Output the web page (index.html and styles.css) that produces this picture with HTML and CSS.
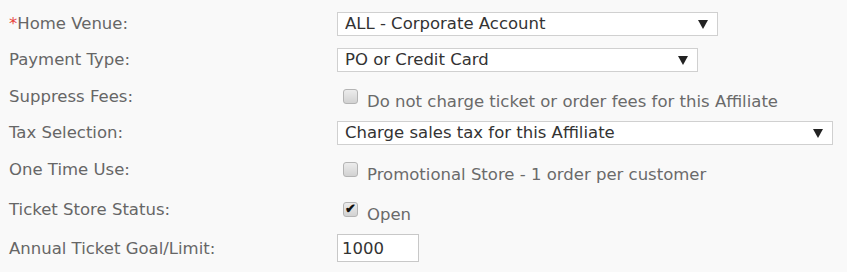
FILE: index.html
```html
<!DOCTYPE html>
<html lang="en">
<head>
    <meta charset="UTF-8">
    <title>Affiliate Settings</title>
    <link rel="stylesheet" href="styles.css">
</head>
<body>
    <form class="settings-form">
        <div class="form-row row-venue">
            <label class="field-label"><span class="required">*</span>Home Venue:</label>
            <div class="select-wrap venue-select">
                <select class="field-select">
                    <option>ALL - Corporate Account</option>
                </select>
            </div>
        </div>
        <div class="form-row row-payment">
            <label class="field-label">Payment Type:</label>
            <div class="select-wrap payment-select">
                <select class="field-select">
                    <option>PO or Credit Card</option>
                </select>
            </div>
        </div>
        <div class="form-row check-row row-fees">
            <label class="field-label">Suppress Fees:</label>
            <label class="check-option">
                <input type="checkbox" class="check-box">
                <span>Do not charge ticket or order fees for this Affiliate</span>
            </label>
        </div>
        <div class="form-row row-tax">
            <label class="field-label">Tax Selection:</label>
            <div class="select-wrap tax-select">
                <select class="field-select">
                    <option>Charge sales tax for this Affiliate</option>
                </select>
            </div>
        </div>
        <div class="form-row check-row row-once">
            <label class="field-label">One Time Use:</label>
            <label class="check-option">
                <input type="checkbox" class="check-box">
                <span>Promotional Store - 1 order per customer</span>
            </label>
        </div>
        <div class="form-row check-row row-status">
            <label class="field-label">Ticket Store Status:</label>
            <label class="check-option">
                <input type="checkbox" class="check-box" checked>
                <span>Open</span>
            </label>
        </div>
        <div class="form-row row-goal">
            <label class="field-label">Annual Ticket Goal/Limit:</label>
            <input type="text" class="field-input" value="1000">
        </div>
    </form>
</body>
</html>
```

FILE: styles.css
```css
body {
    margin: 0;
    background-color: #f9f9f9;
    font-family: "DejaVu Sans", Verdana, sans-serif;
    font-size: 16.5px;
    color: #666;
}
.settings-form {
    padding-top: 11px;
}
.form-row {
    display: flex;
    align-items: center;
}
.field-label {
    width: 328px;
    padding-left: 9px;
    flex-shrink: 0;
}
.required {
    color: #e8413a;
}
.row-venue {
    height: 25px;
}
.row-payment {
    height: 25px;
    margin-top: 11px;
}
.row-fees {
    height: 26px;
    margin-top: 11px;
}
.row-tax {
    height: 25px;
    margin-top: 11px;
}
.row-once {
    height: 26px;
    margin-top: 11px;
}
.row-status {
    height: 26px;
    margin-top: 14px;
}
.row-goal {
    height: 28px;
    margin-top: 12px;
}
.check-row .check-option {
    margin-top: 10px;
}
.select-wrap {
    position: relative;
}
.select-wrap::after {
    content: "";
    position: absolute;
    right: 10px;
    top: 8px;
    border-left: 5px solid transparent;
    border-right: 5px solid transparent;
    border-top: 9px solid #222;
    pointer-events: none;
}
.field-select {
    appearance: none;
    -webkit-appearance: none;
    display: block;
    width: 100%;
    height: 24px;
    margin: 0;
    padding: 0 7px;
    border: 1px solid #d0d0d0;
    border-radius: 0;
    background-color: #fff;
    font-family: "DejaVu Sans", Verdana, sans-serif;
    font-size: 16.5px;
    color: #333;
}
.venue-select {
    width: 381px;
}
.payment-select {
    width: 361px;
}
.tax-select {
    width: 496px;
}
.check-option {
    display: flex;
    align-items: center;
    gap: 9px;
    padding-left: 6px;
    color: #6a6a6a;
}
.check-box {
    appearance: none;
    -webkit-appearance: none;
    position: relative;
    width: 15px;
    height: 15px;
    margin: 0;
    margin-top: -10px;
    border: 1px solid #b4b4b4;
    border-radius: 3px;
    background: linear-gradient(#ececec, #d2d2d2);
}
.check-box:checked::after {
    content: "\2714";
    position: absolute;
    left: 1px;
    top: -2px;
    font-size: 13px;
    font-weight: bold;
    color: #111;
}
.field-input {
    width: 82px;
    height: 28px;
    box-sizing: border-box;
    margin: 0;
    padding: 0 4px;
    border: 1px solid #c8c8c8;
    background-color: #fff;
    font-family: "DejaVu Sans", Verdana, sans-serif;
    font-size: 16.5px;
    color: #333;
}
```
